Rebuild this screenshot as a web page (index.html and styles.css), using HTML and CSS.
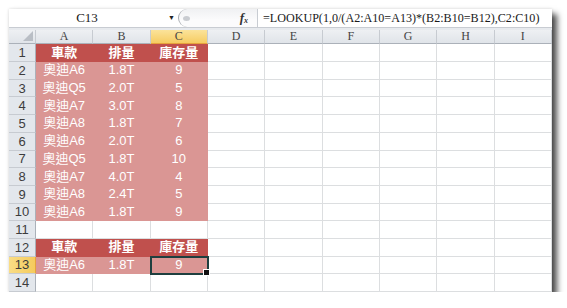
FILE: index.html
```html
<!DOCTYPE html>
<html lang="zh-Hant">
  <head>
    <meta charset="UTF-8" />
    <title>LOOKUP</title>
    <link rel="stylesheet" href="styles.css">
  </head>
  <body>
    <div class="window">
      <!-- 名稱方塊 + 資料編輯列 -->
      <div class="formula-bar">
        <div class="name-box">C13</div>
        <span class="drop">&#9660;</span>
        <div class="fx-box">
          <span class="grip"></span>
          <span class="fx">f<sub>x</sub></span>
        </div>
        <div class="formula">=LOOKUP(1,0/(A2:A10=A13)*(B2:B10=B12),C2:C10)</div>
      </div>
      <div class="bar-gap"></div>

      <table class="sheet">
        <colgroup>
          <col class="c-head" />
          <col span="9" />
        </colgroup>
        <thead>
          <tr>
            <th class="corner"><span class="tri"></span></th>
            <th>A</th><th>B</th><th class="on">C</th><th>D</th><th>E</th><th>F</th><th>G</th><th>H</th><th>I</th>
          </tr>
        </thead>
        <tbody>
          <tr><th>1</th><td class="hd">車款</td><td class="hd">排量</td><td class="hd">庫存量</td><td></td><td></td><td></td><td></td><td></td><td></td></tr>
          <tr><th>2</th><td class="lt">奧迪A6</td><td class="lt">1.8T</td><td class="lt">9</td><td></td><td></td><td></td><td></td><td></td><td></td></tr>
          <tr><th>3</th><td class="lt">奧迪Q5</td><td class="lt">2.0T</td><td class="lt">5</td><td></td><td></td><td></td><td></td><td></td><td></td></tr>
          <tr><th>4</th><td class="lt">奧迪A7</td><td class="lt">3.0T</td><td class="lt">8</td><td></td><td></td><td></td><td></td><td></td><td></td></tr>
          <tr><th>5</th><td class="lt">奧迪A8</td><td class="lt">1.8T</td><td class="lt">7</td><td></td><td></td><td></td><td></td><td></td><td></td></tr>
          <tr><th>6</th><td class="lt">奧迪A6</td><td class="lt">2.0T</td><td class="lt">6</td><td></td><td></td><td></td><td></td><td></td><td></td></tr>
          <tr><th>7</th><td class="lt">奧迪Q5</td><td class="lt">1.8T</td><td class="lt">10</td><td></td><td></td><td></td><td></td><td></td><td></td></tr>
          <tr><th>8</th><td class="lt">奧迪A7</td><td class="lt">4.0T</td><td class="lt">4</td><td></td><td></td><td></td><td></td><td></td><td></td></tr>
          <tr><th>9</th><td class="lt">奧迪A8</td><td class="lt">2.4T</td><td class="lt">5</td><td></td><td></td><td></td><td></td><td></td><td></td></tr>
          <tr><th>10</th><td class="lt">奧迪A6</td><td class="lt">1.8T</td><td class="lt">9</td><td></td><td></td><td></td><td></td><td></td><td></td></tr>
          <tr><th>11</th><td></td><td></td><td></td><td></td><td></td><td></td><td></td><td></td><td></td></tr>
          <tr><th>12</th><td class="hd">車款</td><td class="hd">排量</td><td class="hd">庫存量</td><td></td><td></td><td></td><td></td><td></td><td></td></tr>
          <tr><th class="on">13</th><td class="lt">奧迪A6</td><td class="lt">1.8T</td><td class="lt sel">9</td><td></td><td></td><td></td><td></td><td></td><td></td></tr>
          <tr><th>14</th><td></td><td></td><td></td><td></td><td></td><td></td><td></td><td></td><td></td></tr>
        </tbody>
      </table>
    </div>
  </body>
</html>
```

FILE: styles.css
```css
body {
  margin: 0;
  padding: 9px 0 0 9px;
  background: #fff;
  font-family: "Liberation Sans", Arial, sans-serif;
}
.window {
  width: 543px;
  height: 283px;
  background: #fff;
  box-shadow: 5px 5px 6px rgba(0, 0, 0, 0.7), 0 0 3px rgba(0, 0, 0, 0.15);
  display: flex;
  flex-direction: column;
  overflow: hidden;
}

/* 資料編輯列 */
.formula-bar {
  display: flex;
  align-items: center;
  height: 18px;
  border-bottom: 1px solid #c8ccd2;
  font-family: "Liberation Serif", "Times New Roman", serif;
  color: #1a1a1a;
}
.name-box {
  width: 156px;
  text-align: center;
  font-size: 13px;
}
.drop {
  width: 13px;
  font-size: 7px;
  color: #222;
  text-align: center;
}
.fx-box {
  display: flex;
  align-items: center;
  width: 80px;
  height: 18px;
  box-sizing: border-box;
  border-left: 1px solid #a9adb3;
  border-right: 1px solid #c8ccd2;
  border-radius: 9px 0 0 9px;
  background: linear-gradient(#f0f1f3, #fbfbfc 60%);
}
.grip {
  width: 7px;
  height: 5px;
  margin-left: 4px;
  border-radius: 50%;
  background: #c9ccd1;
}
.fx {
  margin-left: auto;
  margin-right: 9px;
  font-style: italic;
  font-weight: bold;
  font-size: 13px;
  color: #333;
}
.fx sub {
  font-size: 8px;
  vertical-align: -1px;
}
.formula {
  padding-left: 5px;
  font-size: 12.1px;
  white-space: nowrap;
}
.bar-gap {
  height: 3px;
  background: #e7eaee;
}

/* 工作表 */
.sheet {
  width: 543px;
  table-layout: fixed;
  border-spacing: 0;
  font-family: "Liberation Sans", "Noto Sans CJK TC", sans-serif;
  font-size: 13px;
}
.c-head {
  width: 27px;
}
.sheet thead th {
  height: 13px;
  padding: 0;
  font-family: "Liberation Serif", "Times New Roman", serif;
  font-weight: normal;
  font-size: 12px;
  line-height: 13px;
  color: #444;
  background: linear-gradient(#eef0f3, #e0e4e9);
  border-right: 1px solid #c7cbd1;
  border-bottom: 1px solid #abb1b9;
}
.sheet thead th.on {
  background: linear-gradient(#fbe39a, #f6cc62);
  border-bottom-color: #e6a23c;
}
.corner {
  position: relative;
}
.tri {
  position: absolute;
  right: 2px;
  bottom: 2px;
  width: 0;
  height: 0;
  border-left: 10px solid transparent;
  border-bottom: 10px solid #b9bec5;
}
.sheet tbody tr {
  height: 17.7px;
}
.sheet tbody th {
  padding: 0;
  font-weight: normal;
  font-size: 13px;
  color: #3c3c3c;
  background: #e3e7ec;
  border-right: 1px solid #abb1b9;
  border-bottom: 1px solid #c7cbd1;
}
.sheet tbody th.on {
  background: linear-gradient(90deg, #f9dd86, #f5cb5c);
  border-right-color: #e6a23c;
}
.sheet td {
  padding: 0;
  text-align: center;
  line-height: 16px;
  color: #fff;
  border-right: 1px solid #dcdee0;
  border-bottom: 1px solid #dcdee0;
  white-space: nowrap;
}
.sheet td.hd {
  font-weight: bold;
  background: #c0504d;
  border-color: #c0504d;
}
.sheet td.lt {
  background: #da9694;
  border-color: #da9694;
}
.sheet td.sel {
  position: relative;
  outline: 2px solid #1e3f3f;
  outline-offset: -1px;
}
.sheet td.sel::after {
  content: "";
  position: absolute;
  right: -3px;
  bottom: -3px;
  width: 5px;
  height: 5px;
  background: #111;
  border: 1px solid #fff;
}
```
